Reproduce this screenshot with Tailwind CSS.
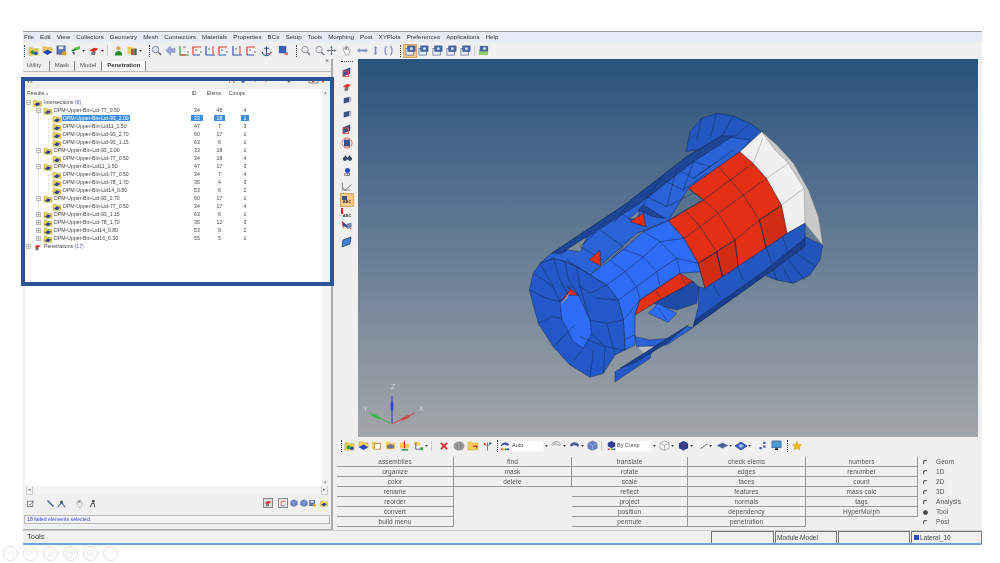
<!DOCTYPE html>
<html lang="en">
<head>
    <meta charset="UTF-8">
    <title>HyperMesh - Penetration</title>
    <script src="https://cdn.jsdelivr.net/npm/@tailwindcss/browser@4"></script>
</head>
<body class="bg-white w-[1000px] h-[563px] overflow-hidden relative font-['Liberation_Sans',Arial,sans-serif] text-[#444]">

<!-- shared icons -->
<svg class="hidden">
    <symbol id="fold" viewBox="0 0 12 10"><path d="M1 2h4l1 1h5v6H1z" fill="#f4d64e" stroke="#a98f26" stroke-width=".6"/><path d="M6 4l4 2-4 3-4-2z" fill="#2b3f9e"/></symbol>
    <symbol id="mix" viewBox="0 0 12 12"><path d="M1 3h4l1 1h5v7H1z" fill="#f1cf5a" stroke="#a98f26" stroke-width=".5"/><circle cx="5" cy="8" r="2.2" fill="#2d9c3c"/><circle cx="8.5" cy="9" r="2" fill="#2c49b0"/></symbol>
    <symbol id="fblue" viewBox="0 0 12 12"><path d="M1 2h4l1 1h5v5H1z" fill="#f1cf5a" stroke="#a98f26" stroke-width=".5"/><path d="M6 5l5 3-5 3-5-3z" fill="#2242c0"/></symbol>
    <symbol id="disk" viewBox="0 0 12 12"><rect x="1" y="1" width="9" height="9" fill="#5b74b4" stroke="#2d3f78" stroke-width=".6"/><rect x="3" y="1.500" width="5" height="3" fill="#e8edf8"/><circle cx="9" cy="9" r="2.500" fill="#d8a52a"/></symbol>
    <symbol id="green" viewBox="0 0 12 12"><path d="M1 6l5-3 3 1-5 3z" fill="#2f8f2e"/><path d="M5 3l6-2v3l-4 2z" fill="#62b84a"/><path d="M2 8l3 3V8z" fill="#2f3f7a"/></symbol>
    <symbol id="redc" viewBox="0 0 12 12"><path d="M1 6l5-3 5 1-5 4z" fill="#d6332a"/><path d="M3 8l5-1-1 4H3z" fill="#777"/></symbol>
    <symbol id="user" viewBox="0 0 12 12"><circle cx="6" cy="3" r="2.300" fill="#d9a55f"/><path d="M2 11c0-4 2-5 4-5s4 1 4 5z" fill="#2f8a38"/></symbol>
    <symbol id="rain" viewBox="0 0 12 12"><path d="M1 2h4l1 1h5v7H1z" fill="#f1cf5a"/><path d="M5 4h2v7H5z" fill="#d03a35"/><path d="M7 4h2v7H7z" fill="#38a040"/><path d="M9 4h2v7H9z" fill="#3552b8"/></symbol>
    <symbol id="zoomi" viewBox="0 0 12 12"><circle cx="5" cy="5" r="3.500" fill="#dfe4f2" stroke="#7b86a8"/><path d="M8 8l3 3" stroke="#666" stroke-width="1.500"/></symbol>
    <symbol id="larrow" viewBox="0 0 12 12"><path d="M1 6l5-5v3h5v4H6v3z" fill="#9aa6d6" stroke="#6c78a8" stroke-width=".5"/></symbol>
    <symbol id="axgr" viewBox="0 0 12 12"><path d="M2 1v9h9" fill="none" stroke="#3aa043" stroke-width="1.200"/><path d="M2 10h6" stroke="#d9423a" stroke-width="1"/><path d="M5 2h3M9 7h2" stroke="#555" stroke-width=".8"/></symbol>
    <symbol id="axrb" viewBox="0 0 12 12"><path d="M2 10V2h8" fill="none" stroke="#d9423a" stroke-width="1.200"/><path d="M2 10h7" stroke="#3450b4" stroke-width="1"/><path d="M4 5h2M9 7h2" stroke="#555" stroke-width=".8"/></symbol>
    <symbol id="axbr" viewBox="0 0 12 12"><path d="M2 1v9h9" fill="none" stroke="#3450b4" stroke-width="1.200"/><path d="M9 1v9" stroke="#d9423a" stroke-width="1"/><path d="M4 4h2" stroke="#555" stroke-width=".8"/></symbol>
    <symbol id="anchor" viewBox="0 0 12 12"><path d="M6 1v9M3 3h6M1 7c1 3 3 4 5 4s4-1 5-4" fill="none" stroke="#3b5aa6" stroke-width="1.300"/><path d="M6 9h3" stroke="#d9423a"/></symbol>
    <symbol id="cubear" viewBox="0 0 12 12"><rect x="1" y="1" width="8" height="8" fill="#3a5bb8"/><path d="M6 10l5-2-1 3z" fill="#d9423a"/></symbol>
    <symbol id="zoomg" viewBox="0 0 12 12"><circle cx="5.500" cy="5" r="3.500" fill="#eee" stroke="#8a8f9c"/><path d="M8 8l3 3" stroke="#777" stroke-width="1.500"/></symbol>
    <symbol id="cross" viewBox="0 0 12 12"><path d="M6 1v10M1 6h10" stroke="#7c88aa" stroke-width="1.100"/><path d="M6 1L4.500 3h3zM6 11L4.500 9h3zM1 6l2-1.500v3zM11 6L9 4.500v3z" fill="#5d6c96"/></symbol>
    <symbol id="hand" viewBox="0 0 12 12"><path d="M3 6V3l1 0 1 2V1.500h1V5l1-3 1 .5V6l1-1 1 1-2 5H5z" fill="#fff" stroke="#666" stroke-width=".6"/></symbol>
    <symbol id="hz" viewBox="0 0 12 12"><path d="M0 6l3-2.500v1.500h6V3.500L12 6 9 8.500V7H3v1.500z" fill="#7f8ec0"/></symbol>
    <symbol id="vt" viewBox="0 0 12 12"><path d="M6 0l2.500 3H7v6h1.500L6 12 3.500 9H5V3H3.500z" fill="#7f8ec0"/></symbol>
    <symbol id="rot" viewBox="0 0 12 12"><path d="M4 1C1.500 3 1.500 9 4 11M8 1c2.500 2 2.500 8 0 10" fill="none" stroke="#7f8ec0" stroke-width="1.300"/></symbol>
    <symbol id="view" viewBox="0 0 12 12"><rect x="1" y="4" width="8" height="7" fill="#e8edf8" stroke="#4c5f8e" stroke-width=".7"/><rect x="3" y="1" width="8" height="6" fill="#4d6aa8" stroke="#33487a" stroke-width=".6"/><circle cx="7" cy="4" r="1.500" fill="#d6e0f4"/></symbol>
    <symbol id="viewg" viewBox="0 0 12 12"><rect x="1" y="5" width="10" height="6" fill="#8fd06a"/><rect x="2" y="1" width="9" height="6" fill="#4d6aa8"/><circle cx="7" cy="4" r="1.500" fill="#d6e0f4"/></symbol>
    <symbol id="vbox" viewBox="0 0 12 12"><path d="M1 3l8-2v7l-8 2z" fill="#3d4f86"/><path d="M8 2l3-1v6l-3 1z" fill="#aab2c8"/></symbol>
    <symbol id="cube" viewBox="0 0 12 12"><path d="M6 1l5 2.500v5.500L6 11.500 1 9V3.500z" fill="#6a80c4" stroke="#44548e" stroke-width=".5"/><path d="M6 6v5.500M1 3.500L6 6l5-2.500" fill="none" stroke="#d5dbf0" stroke-width=".5"/></symbol>
    <symbol id="wire" viewBox="0 0 12 12"><path d="M6 1l5 2.500v5.500L6 11.500 1 9V3.500zM6 6v5.500M1 3.500L6 6l5-2.500" fill="#f4f4f4" stroke="#888" stroke-width=".6"/></symbol>
    <symbol id="cubed" viewBox="0 0 12 12"><path d="M6 1l5 2.500v5.500L6 11.500 1 9V3.500z" fill="#2e3f8e"/><path d="M6 6v5.500M1 3.500L6 6l5-2.500" fill="none" stroke="#7a3a8a" stroke-width=".6"/></symbol>
    <symbol id="dia" viewBox="0 0 12 12"><path d="M0 6l6-3 6 3-6 3z" fill="#4d5f92" stroke="#7c88aa" stroke-width=".5"/></symbol>
    <symbol id="diab" viewBox="0 0 12 12"><path d="M0 6l6-4 6 4-6 4z" fill="#3a5bd0" stroke="#26398e" stroke-width=".7"/><path d="M3 6l3-2 3 2-3 2z" fill="#a7b8ee"/></symbol>
    <symbol id="dots" viewBox="0 0 12 12"><path d="M2 8h3v3H2zM7 6h3v3H7zM7 1h3v3H7z" fill="#3f57b4"/></symbol>
    <symbol id="mon" viewBox="0 0 12 12"><rect x="1" y="1" width="10" height="7.500" fill="#4d9ad6" stroke="#33487a" stroke-width=".6"/><path d="M4 11h4l-1-2.500H5z" fill="#333"/></symbol>
    <symbol id="star" viewBox="0 0 12 12"><path d="M6 .5l1.700 3.600 3.900.5-2.900 2.700.8 3.900L6 8.800l-3.500 1.900.8-3.900L.4 4.600l3.900-.5z" fill="#f2b70f" stroke="#b58a12" stroke-width=".4"/></symbol>
    <symbol id="xred" viewBox="0 0 12 12"><path d="M1.500 3L3 1.500l3 3 3-3L10.500 3l-3 3 3 3L9 10.500l-3-3-3 3L1.500 9l3-3z" fill="#d8282a"/></symbol>
    <symbol id="blob" viewBox="0 0 12 12"><ellipse cx="6" cy="6" rx="5.500" ry="4.500" fill="#9a9a9a"/><path d="M3 4c2 3 2 4 1 6M7 2c1 3 1 5 0 8" stroke="#666" fill="none" stroke-width=".6"/></symbol>
    <symbol id="swapf" viewBox="0 0 12 12"><path d="M1 2h4l1 1h5v7H1z" fill="#f1cf5a" stroke="#b89a2a" stroke-width=".4"/><path d="M4 7h5v2l2-2.500L9 5" fill="#d8423a"/></symbol>
    <symbol id="fork" viewBox="0 0 12 12"><path d="M6 2v9M6 6L3 4M6 6l3-2" stroke="#777" fill="none"/><circle cx="3" cy="4" r="1.200" fill="#d83a32"/><circle cx="9" cy="3" r="1.200" fill="#3450b4"/></symbol>
    <symbol id="boxi" viewBox="0 0 12 12"><path d="M1 2h4l1 1h5v7H1z" fill="#f1cf5a"/><rect x="4" y="4" width="6" height="6" fill="#fff" stroke="#c64" stroke-width=".7"/></symbol>
    <symbol id="gear" viewBox="0 0 12 12"><path d="M1 2h4l1 1h5v7H1z" fill="#f1cf5a"/><ellipse cx="6" cy="7" rx="4" ry="2.500" fill="#777"/></symbol>
    <symbol id="redb" viewBox="0 0 12 12"><path d="M1 3h4l1 1h5v5H1z" fill="#f1cf5a"/><path d="M6 1v8" stroke="#d8282a" stroke-width="1.400"/><path d="M3 10h7v1.500H3z" fill="#2e8a3a"/></symbol>
    <symbol id="axis" viewBox="0 0 12 12"><path d="M1 2h4l1 1h2v3H1z" fill="#f1cf5a"/><path d="M3 3v7h7" fill="none" stroke="#5060c0"/><rect x="8" y="8" width="3" height="3" fill="#3ca03c"/></symbol>
    <symbol id="carrow" viewBox="0 0 4 3"><path d="M0 0h4L2 3z" fill="#333"/></symbol>
    <symbol id="ring" viewBox="0 0 12 12"><path d="M1 5c2-4 7-4 9-1 1 2-1 2-3 1-2-1-4-1-5 1z" fill="none" stroke="#8a8a8a"/></symbol>
    <symbol id="ringd" viewBox="0 0 12 12"><path d="M1 6c1-4 7-5 10-1l-1 3C8 5 5 5 3 7z" fill="#4d5f92"/></symbol>
    <symbol id="autoi" viewBox="0 0 12 12"><path d="M1 5c2-4 7-4 10-1l-2 2C7 4 4 4 2 6z" fill="#3c50a8"/><path d="M1 9h2.500v2H1z" fill="#d8423a"/><path d="M3.500 9H6v2H3.500z" fill="#e0c030"/><path d="M6 9h2.500v2H6z" fill="#38a040"/><path d="M8.500 9H11v2H8.500z" fill="#3552b8"/></symbol>
    <symbol id="compi" viewBox="0 0 12 12"><path d="M6 0l5 2.500V7L6 9.500 1 7V2.500z" fill="#2e3f8e"/><path d="M1 10h2.500v2H1z" fill="#d8423a"/><path d="M3.500 10H6v2H3.500z" fill="#e0c030"/><path d="M6 10h2.500v2H6z" fill="#38a040"/><path d="M8.500 10H11v2H8.500z" fill="#3552b8"/></symbol>
    <symbol id="vic" viewBox="0 0 12 12"><path d="M1 4l8-3v7l-8 3z" fill="#3d4f86"/><rect x="1" y="5" width="6" height="6" fill="none" stroke="#e25b48"/></symbol>
    <symbol id="pl" viewBox="0 0 7 7"><rect x=".5" y=".5" width="6" height="6" fill="#f4f4f4" stroke="#aaa"/><path d="M2 3.500h3M3.500 2v3" stroke="#777" stroke-width=".7"/></symbol>
    <symbol id="mi" viewBox="0 0 7 7"><rect x=".5" y=".5" width="6" height="6" fill="#f4f4f4" stroke="#aaa"/><path d="M2 3.500h3" stroke="#777" stroke-width=".7"/></symbol>
</svg>

<!-- application window -->
<div class="absolute left-[23px] top-[31px] w-[959px] h-[512px] bg-[#f0f0f0] border-t border-[#9a9a9a] flex flex-col blur-[0.3px]">

    <!-- menu bar -->
    <div class="h-[10px] bg-[#e6ebf7] flex items-center pl-[1px] gap-[6.1px] text-[6.2px] text-[#333] shrink-0">
        <span>File</span><span>Edit</span><span>View</span><span>Collectors</span><span>Geometry</span><span>Mesh</span><span>Connectors</span><span>Materials</span><span>Properties</span><span>BCs</span><span>Setup</span><span>Tools</span><span>Morphing</span><span>Post</span><span>XYPlots</span><span>Preferences</span><span>Applications</span><span>Help</span>
    </div>

    <!-- main toolbar -->
    <div class="h-[17px] flex items-center shrink-0">
        <div class="w-[1px] h-[12px] ml-[1px] border-l border-dotted border-[#444]"></div>
        <svg class="w-[11px] h-[11px] ml-[3px]"><use href="#mix"/></svg>
        <svg class="w-[11px] h-[11px] ml-[3px]"><use href="#fblue"/></svg>
        <svg class="w-[11px] h-[11px] ml-[3px]"><use href="#disk"/></svg>
        <svg class="w-[11px] h-[11px] ml-[3px]"><use href="#green"/></svg>
        <svg class="w-[3px] h-[2px] ml-[1px]"><use href="#carrow"/></svg>
        <svg class="w-[12px] h-[11px] ml-[3px]"><use href="#redc"/></svg>
        <svg class="w-[3px] h-[2px] ml-[1px]"><use href="#carrow"/></svg>
        <div class="w-[1px] h-[11px] ml-[3px] bg-[#ccc]"></div>
        <svg class="w-[11px] h-[12px] ml-[5px]"><use href="#user"/></svg>
        <svg class="w-[12px] h-[11px] ml-[2px]"><use href="#rain"/></svg>
        <svg class="w-[3px] h-[2px] ml-[1px]"><use href="#carrow"/></svg>
        <div class="w-[1px] h-[12px] ml-[7px] border-l border-dotted border-[#444]"></div>
        <svg class="w-[11px] h-[11px] ml-[1px]"><use href="#zoomi"/></svg>
        <svg class="w-[11px] h-[11px] ml-[3px]"><use href="#larrow"/></svg>
        <svg class="w-[12px] h-[12px] ml-[2px]"><use href="#axgr"/></svg>
        <svg class="w-[12px] h-[12px] ml-[1px]"><use href="#axrb"/></svg>
        <svg class="w-[12px] h-[12px] ml-[1px]"><use href="#axbr"/></svg>
        <svg class="w-[12px] h-[12px] ml-[1px]"><use href="#axrb"/></svg>
        <svg class="w-[12px] h-[12px] ml-[2px]"><use href="#axbr"/></svg>
        <svg class="w-[12px] h-[12px] ml-[2px]"><use href="#axrb"/></svg>
        <svg class="w-[11px] h-[12px] ml-[4px]"><use href="#anchor"/></svg>
        <svg class="w-[11px] h-[11px] ml-[6px]"><use href="#cubear"/></svg>
        <div class="w-[1px] h-[12px] ml-[7px] border-l border-dotted border-[#444]"></div>
        <svg class="w-[11px] h-[11px] ml-[3px]"><use href="#zoomg"/></svg>
        <svg class="w-[11px] h-[11px] ml-[3px]"><use href="#zoomg"/></svg>
        <svg class="w-[11px] h-[11px] ml-[1px]"><use href="#cross"/></svg>
        <svg class="w-[11px] h-[11px] ml-[4px]"><use href="#hand"/></svg>
        <svg class="w-[11px] h-[11px] ml-[5px]"><use href="#hz"/></svg>
        <svg class="w-[9px] h-[11px] ml-[3px]"><use href="#vt"/></svg>
        <svg class="w-[11px] h-[11px] ml-[3px]"><use href="#rot"/></svg>
        <div class="w-[1px] h-[12px] ml-[6px] border-l border-dotted border-[#444]"></div>
        <div class="w-[14px] h-[14px] ml-[2px] bg-[#f8c98a] border border-[#d9a868] flex items-center justify-center"><svg class="w-[11px] h-[11px]"><use href="#view"/></svg></div>
        <svg class="w-[11px] h-[11px] ml-[1px]"><use href="#view"/></svg>
        <svg class="w-[11px] h-[11px] ml-[3px]"><use href="#view"/></svg>
        <svg class="w-[11px] h-[11px] ml-[3px]"><use href="#view"/></svg>
        <svg class="w-[11px] h-[11px] ml-[3px]"><use href="#view"/></svg>
        <div class="w-[1px] h-[11px] ml-[3px] bg-[#ccc]"></div>
        <svg class="w-[11px] h-[11px] ml-[3px]"><use href="#viewg"/></svg>
    </div>

    <div class="flex grow min-h-0">
        <!-- left panel -->
        <div class="w-[310px] shrink-0 border-r-2 border-b border-[#aaa] flex flex-col relative">
            <div class="h-[12px] flex items-end text-[6px] text-[#555] shrink-0">
                <span class="pl-[3.500px] pr-[7.500px] pb-[1px]">Utility</span>
                <span class="border-l border-[#888] px-[5px] pb-[1px]">Mask</span>
                <span class="border-l border-[#888] px-[5px] pb-[1px]">Model</span>
                <span class="border-l border-r border-[#888] pl-[5px] pr-[5px] pb-[1px] font-bold text-[#333] bg-[#f7f7f7]">Penetration</span>
            </div>
            <span class="absolute right-[2px] top-[-3px] text-[7px] text-[#666]">×</span>
            <div class="h-[18px] border-t border-[#bbb] shrink-0 flex items-start pl-[4px] pr-[6px] pt-[6px] text-[5px] text-[#666]">
                <span class="grow">▾s</span>
                <svg class="w-[96px] h-[6px]" viewBox="0 0 96 6">
                    <path d="M0 1h5v4M0 1v4" fill="none" stroke="#d9423a"/><circle cx="14" cy="3" r="2" fill="#5a74b8"/><path d="M24 1l2 3 2-3" fill="#3c5ea8"/><path d="M35 1l2 3 2-3" fill="#d9423a"/>
                    <circle cx="60" cy="3" r="1.500" fill="#666"/><path d="M80 1h9v4h-9z" fill="none" stroke="#888"/><path d="M82 2l2 3 2-3" fill="#d9423a"/><path d="M92 2l2 3 2-3" fill="#d9423a"/>
                </svg>
            </div>

            <!-- results list -->
            <div class="grow mx-[2px] bg-white relative text-[5.200px] text-[#444] min-h-0">
                <div class="h-[10px] flex items-center pr-[77px] pl-[2px]">
                    <span class="grow">Results <span class="text-[#999]">▴</span></span>
                    <span class="w-[24px] text-center">ID</span>
                    <span class="w-[16px] text-center">Elems</span>
                    <span class="w-[30px] text-center">Comps</span>
                </div>

                <!-- tree guide lines -->
                <svg class="absolute left-0 top-[10px] w-[40px] h-[152px]">
                    <path d="M3.500 4V148M13.500 14V132M28 14H18M23.500 20V44M23.500 20h5M23.500 28h5M23.500 36h5M23.500 44h5M23.500 60h5M23.500 76h5M23.500 84h5M23.500 92h5M23.500 108h5M23.500 76V92" fill="none" stroke="#bbb" stroke-width=".6" stroke-dasharray="1 1"/>
                    <use href="#mi" x="1" y="1" width="5" height="5"/>
                    <use href="#mi" x="11" y="9" width="5" height="5"/>
                    <use href="#mi" x="11" y="49" width="5" height="5"/>
                    <use href="#mi" x="11" y="65" width="5" height="5"/>
                    <use href="#mi" x="11" y="97" width="5" height="5"/>
                    <use href="#pl" x="11" y="113" width="5" height="5"/>
                    <use href="#pl" x="11" y="121" width="5" height="5"/>
                    <use href="#pl" x="11" y="129" width="5" height="5"/>
                    <use href="#pl" x="11" y="137" width="5" height="5"/>
                    <use href="#pl" x="1" y="145" width="5" height="5"/>
                </svg>

                <div class="pr-[69px]">
                    <div class="flex h-2 items-center pl-[7px]"><svg class="w-[11px] h-[8px]"><use href="#fold"/></svg><span class="grow ml-[1px]">Intersections <span class="text-[#4b5de0]">(8)</span></span></div>
                    <div class="flex h-2 items-center pl-[18px]"><svg class="w-[10px] h-[8px]"><use href="#fold"/></svg><span class="grow ml-[1px]">DPM-Upper-Bin-Lid-77_0.50</span><span class="w-[24px] text-center">34</span><span class="w-[21px] text-center">48</span><span class="w-[30px] text-center">4</span></div>
                    <div class="flex h-2 items-center pl-[27px]"><svg class="w-[10px] h-[8px]"><use href="#fold"/></svg><span class="grow"><span class="bg-[#3a8ee6] text-white px-[1px]">DPM-Upper-Bin-Lid-93_2.00</span></span><span class="w-[24px] text-center"><span class="bg-[#3a8ee6] text-white px-[3px]">33</span></span><span class="w-[21px] text-center"><span class="bg-[#3a8ee6] text-white px-[3px]">18</span></span><span class="w-[30px] text-center"><span class="bg-[#3a8ee6] text-white px-[3px]">1</span></span></div>
                    <div class="flex h-2 items-center pl-[27px]"><svg class="w-[10px] h-[8px]"><use href="#fold"/></svg><span class="grow ml-[1px]">DPM-Upper-Bin-Lid11_1.50</span><span class="w-[24px] text-center">47</span><span class="w-[21px] text-center">7</span><span class="w-[30px] text-center">3</span></div>
                    <div class="flex h-2 items-center pl-[27px]"><svg class="w-[10px] h-[8px]"><use href="#fold"/></svg><span class="grow ml-[1px]">DPM-Upper-Bin-Lid-93_2.70</span><span class="w-[24px] text-center">60</span><span class="w-[21px] text-center">17</span><span class="w-[30px] text-center">1</span></div>
                    <div class="flex h-2 items-center pl-[27px]"><svg class="w-[10px] h-[8px]"><use href="#fold"/></svg><span class="grow ml-[1px]">DPM-Upper-Bin-Lid-93_1.15</span><span class="w-[24px] text-center">63</span><span class="w-[21px] text-center">6</span><span class="w-[30px] text-center">1</span></div>
                    <div class="flex h-2 items-center pl-[18px]"><svg class="w-[10px] h-[8px]"><use href="#fold"/></svg><span class="grow ml-[1px]">DPM-Upper-Bin-Lid-93_2.00</span><span class="w-[24px] text-center">33</span><span class="w-[21px] text-center">18</span><span class="w-[30px] text-center">1</span></div>
                    <div class="flex h-2 items-center pl-[27px]"><svg class="w-[10px] h-[8px]"><use href="#fold"/></svg><span class="grow ml-[1px]">DPM-Upper-Bin-Lid-77_0.50</span><span class="w-[24px] text-center">34</span><span class="w-[21px] text-center">18</span><span class="w-[30px] text-center">4</span></div>
                    <div class="flex h-2 items-center pl-[18px]"><svg class="w-[10px] h-[8px]"><use href="#fold"/></svg><span class="grow ml-[1px]">DPM-Upper-Bin-Lid11_1.50</span><span class="w-[24px] text-center">47</span><span class="w-[21px] text-center">17</span><span class="w-[30px] text-center">3</span></div>
                    <div class="flex h-2 items-center pl-[27px]"><svg class="w-[10px] h-[8px]"><use href="#fold"/></svg><span class="grow ml-[1px]">DPM-Upper-Bin-Lid-77_0.50</span><span class="w-[24px] text-center">34</span><span class="w-[21px] text-center">7</span><span class="w-[30px] text-center">4</span></div>
                    <div class="flex h-2 items-center pl-[27px]"><svg class="w-[10px] h-[8px]"><use href="#fold"/></svg><span class="grow ml-[1px]">DPM-Upper-Bin-Lid-78_1.70</span><span class="w-[24px] text-center">35</span><span class="w-[21px] text-center">4</span><span class="w-[30px] text-center">3</span></div>
                    <div class="flex h-2 items-center pl-[27px]"><svg class="w-[10px] h-[8px]"><use href="#fold"/></svg><span class="grow ml-[1px]">DPM-Upper-Bin-Lid14_0.80</span><span class="w-[24px] text-center">53</span><span class="w-[21px] text-center">6</span><span class="w-[30px] text-center">2</span></div>
                    <div class="flex h-2 items-center pl-[18px]"><svg class="w-[10px] h-[8px]"><use href="#fold"/></svg><span class="grow ml-[1px]">DPM-Upper-Bin-Lid-93_2.70</span><span class="w-[24px] text-center">60</span><span class="w-[21px] text-center">17</span><span class="w-[30px] text-center">1</span></div>
                    <div class="flex h-2 items-center pl-[27px]"><svg class="w-[10px] h-[8px]"><use href="#fold"/></svg><span class="grow ml-[1px]">DPM-Upper-Bin-Lid-77_0.50</span><span class="w-[24px] text-center">34</span><span class="w-[21px] text-center">17</span><span class="w-[30px] text-center">4</span></div>
                    <div class="flex h-2 items-center pl-[18px]"><svg class="w-[10px] h-[8px]"><use href="#fold"/></svg><span class="grow ml-[1px]">DPM-Upper-Bin-Lid-93_1.15</span><span class="w-[24px] text-center">63</span><span class="w-[21px] text-center">6</span><span class="w-[30px] text-center">1</span></div>
                    <div class="flex h-2 items-center pl-[18px]"><svg class="w-[10px] h-[8px]"><use href="#fold"/></svg><span class="grow ml-[1px]">DPM-Upper-Bin-Lid-78_1.70</span><span class="w-[24px] text-center">35</span><span class="w-[21px] text-center">12</span><span class="w-[30px] text-center">3</span></div>
                    <div class="flex h-2 items-center pl-[18px]"><svg class="w-[10px] h-[8px]"><use href="#fold"/></svg><span class="grow ml-[1px]">DPM-Upper-Bin-Lid14_0.80</span><span class="w-[24px] text-center">53</span><span class="w-[21px] text-center">9</span><span class="w-[30px] text-center">2</span></div>
                    <div class="flex h-2 items-center pl-[18px]"><svg class="w-[10px] h-[8px]"><use href="#fold"/></svg><span class="grow ml-[1px]">DPM-Upper-Bin-Lid16_0.30</span><span class="w-[24px] text-center">55</span><span class="w-[21px] text-center">5</span><span class="w-[30px] text-center">1</span></div>
                    <div class="flex h-2 items-center pl-[7px]"><svg class="w-[11px] h-[8px]"><use href="#redc"/></svg><span class="grow ml-[1px]">Penetrations <span class="text-[#4b5de0]">(17)</span></span></div>
                </div>

                <!-- vertical scrollbar -->
                <div class="absolute right-0 top-0 bottom-0 w-[7px] bg-[#f3f3f3] flex flex-col justify-between items-center text-[5px] text-[#888]"><span>▴</span><span>▾</span></div>
            </div>

            <!-- horizontal scrollbar -->
            <div class="h-[8px] mx-[2px] bg-[#f3f3f3] flex justify-between items-center px-[1px] text-[5px] text-[#888] shrink-0"><span class="border border-[#ccc] px-[1px]">◂</span><span class="border border-[#ccc] px-[1px]">▸</span></div>

            <!-- panel actions -->
            <div class="h-[18px] flex items-center pl-[4px] pr-[3px] shrink-0">
                <svg class="w-[7px] h-[7px]" viewBox="0 0 12 12"><rect x="1" y="2" width="9" height="9" fill="#fff" stroke="#444"/><path d="M3 6l2 3 6-8" fill="none" stroke="#456" stroke-width="1.200"/></svg>
                <svg class="w-[9px] h-[9px] ml-[12px]" viewBox="0 0 12 12"><path d="M2 2l8 8" stroke="#3c6ab0" stroke-width="2"/></svg>
                <svg class="w-[9px] h-[9px] ml-[2px]" viewBox="0 0 12 12"><circle cx="6" cy="4" r="2" fill="#555"/><path d="M1 11l4-5 2 0 4 5" fill="none" stroke="#3c5ea8" stroke-width="1.400"/></svg>
                <svg class="w-[9px] h-[9px] ml-[9px]"><use href="#hand"/></svg>
                <svg class="w-[9px] h-[9px] ml-[4px]" viewBox="0 0 12 12"><circle cx="7" cy="3" r="2" fill="#555"/><path d="M3 11l2-5 3 0 1 5" fill="none" stroke="#555" stroke-width="1.400"/></svg>
                <div class="grow"></div>
                <div class="w-[10px] h-[10px] bg-[#ddd] border border-[#888] flex items-center justify-center mr-[2px]"><svg class="w-[8px] h-[8px]"><use href="#redc"/></svg></div>
                <div class="w-[10px] h-[10px] ml-[3px] bg-[#eee] border border-[#888] flex items-center justify-center"><svg class="w-[7px] h-[7px]"><use href="#axrb"/></svg></div>
                <svg class="w-[8px] h-[8px] ml-[2px]"><use href="#cube"/></svg>
                <svg class="w-[8px] h-[8px] ml-[2px]"><use href="#cube"/></svg>
                <svg class="w-[7px] h-[7px] ml-[1px]"><use href="#disk"/></svg>
                <svg class="w-[8px] h-[7px] ml-[4px]"><use href="#fold"/></svg>
            </div>

            <!-- message line -->
            <div class="h-[9px] mt-[3px] mx-[1px] border border-[#bbb] bg-[#f3f3f3] text-[5.200px] text-[#3c4fe0] flex items-center pl-[2px] shrink-0">18 failed elements selected.</div>
            <div class="h-[5px] shrink-0"></div>
        </div>

        <!-- right side -->
        <div class="grow flex flex-col min-w-0">
            <div class="h-[378px] flex shrink-0">
                <div class="w-[25px] pl-[3px] flex flex-col items-center text-[4px] font-bold shrink-0 pt-[1px]">
                    <div class="h-[4px] w-[12px] border-t border-dotted border-[#444] mt-[1px]"></div>
                    <svg class="w-[11px] h-[12px] mt-[1px]"><use href="#vic"/></svg>
                    <svg class="w-[10px] h-[11px] mt-[3px]"><use href="#redc"/></svg>
                    <svg class="w-[9px] h-[11px] mt-[3px]"><use href="#vbox"/></svg>
                    <svg class="w-[9px] h-[11px] mt-[3px]"><use href="#vbox"/></svg>
                    <svg class="w-[11px] h-[12px] mt-[3px]"><use href="#vic"/></svg>
                    <svg class="w-[12px] h-[12px] mt-[2px]" viewBox="0 0 12 12"><circle cx="6" cy="6" r="5" fill="#fff" stroke="#e25b48"/><rect x="3" y="2.500" width="6" height="7" fill="#3d4f86"/></svg>
                    <svg class="w-[11px] h-[10px] mt-[4px]" viewBox="0 0 12 12"><circle cx="3" cy="7" r="2.500" fill="#33466e"/><circle cx="9" cy="7" r="2.500" fill="#33466e"/><path d="M3 3l3 4 3-4" fill="none" stroke="#33466e" stroke-width="1.500"/></svg>
                    <div class="mt-[5px] flex flex-col items-center leading-[4px]"><span class="w-[5px] h-[5px] rounded-full bg-[#2c49b0]"></span><span class="text-[#444]">123</span></div>
                    <svg class="w-[12px] h-[11px] mt-[3px]" viewBox="0 0 12 12"><path d="M1 3v8h9M1 8l3 3 7-6" fill="none" stroke="#666" stroke-width=".8"/></svg>
                    <div class="w-[14px] h-[14px] mt-[2px] bg-[#f8c98a] border border-[#d9a868] flex flex-col items-center justify-center leading-[4px]"><span class="w-[5px] h-[4px] bg-[#3d4f86] self-start ml-[1px]"></span><span class="text-[#333]">ABC</span></div>
                    <div class="mt-[1px] flex flex-col items-center leading-[4px] w-[12px]"><span class="w-[1.500px] h-[6px] bg-[#d8282a] self-start"></span><span class="text-[#333]">ABC</span></div>
                    <svg class="w-[12px] h-[11px] mt-[1px]" viewBox="0 0 12 12"><path d="M1 3l6 4v3L1 7z" fill="#3d4f86"/><path d="M6 5l5-1v5l-5 2z" fill="#7d8ab0"/><path d="M1 2l1 8M9 10l2 1" stroke="#d8282a"/></svg>
                    <svg class="w-[12px] h-[12px] mt-[6px]" viewBox="0 0 12 12"><path d="M2 4l8-3-1 7-8 3z" fill="#3f7fd0" stroke="#223766" stroke-width=".7"/></svg>
                </div>

                <!-- graphics area -->
                <div class="w-[620px] shrink-0 relative bg-linear-to-b from-[#28537d] to-[#a3a6a9] overflow-hidden">
                    <svg class="absolute left-[122px] top-[31px] w-[360px] h-[300px]" viewBox="0 0 1080 900" stroke="#15284f" stroke-width="1.500" stroke-linejoin="round">
                        <!-- rear flange -->
                        <path d="M618 185L630 125 665 85 710 70 760 78 810 100 845 125 780 185 700 170Z" fill="#2456c0"/>
                        <path d="M650 150L665 85M690 145L710 70M725 140L760 78M765 140L810 100" fill="none"/>
                        <path d="M975 440L1028 465 1020 510 990 555 940 580 890 570 858 558 940 490Z" fill="#2254bc"/>
                        <path d="M950 490L1008 530M925 510L975 570M905 525L935 580M880 540L890 570" fill="none"/>
                        <!-- upper shell -->
                        <path d="M180 520L215 490 440 340 620 200 725 138 810 150 780 185 625 295 565 392 470 430 330 555 290 530 255 515 220 505Z" fill="#2b62d6"/>
                        <path d="M215 490L440 340 620 200 725 138 760 138 640 215 480 340 245 490Z" fill="#1d4696"/>
                        <path d="M255 482L320 440 302 485 262 480ZM445 388L480 360 472 385Z" fill="#7c8b9c"/>
                        <path d="M490 345L555 385 520 380 474 360Z" fill="#1d4696"/>
                        <path d="M500 320L560 350 640 310M540 265L610 300 680 250M590 235L640 265 710 215M640 215L690 230 760 180M430 375L490 410M360 420L430 470M300 470L370 510M260 510L330 555M400 400L450 340M490 345L540 265M560 350L590 235M610 300L640 215M640 265L690 230M350 425L300 470M430 470L390 510" fill="none"/>
                        <!-- lit surface -->
                        <path d="M330 555L390 510 430 478 490 425 565 392 612 445 655 520 665 545 600 550 480 630 465 675 465 765 435 780 430 690 415 630 380 585Z" fill="#2e6cf5"/>
                        <path d="M380 585L435 545 490 500 540 455 612 445M415 630L470 590 530 545 590 505 655 520M430 690L480 630 540 590 600 550M390 510L435 545 470 590 480 630M430 478L490 500 530 545 540 590M490 425L540 455 590 505 600 550M430 750L465 735" fill="none"/>
                        <!-- red notches -->
                        <path d="M450 395L490 370 497 410Z" fill="#e33014"/>
                        <path d="M327 510L360 480 362 527Z" fill="#e33014"/>
                        <!-- red panel -->
                        <path d="M625 295L715 230 780 185 820 220 860 265 905 345 922 430 775 535 675 595 655 520 612 445 565 392 670 330Z" fill="#e33014"/>
                        <path d="M858 475L922 430 905 345 838 390ZM727 560L775 535 765 450 710 485ZM675 595L727 560 710 485 655 520Z" fill="#cf2c12"/>
                        <path d="M565 392L615 360 670 330 750 270 820 220M612 445L660 410 715 370 790 315 860 265M655 520L710 485 765 450 838 390 905 345M615 360L660 410 710 485 727 560M625 295L670 330 715 370 765 450 775 535M715 230L750 270 790 315 838 390 860 475" fill="none"/>
                        <!-- white end -->
                        <path d="M780 185L845 125 890 165 940 220 985 300 1015 380 1028 465 975 400 922 430 905 345 860 265 820 220Z" fill="#f0f0f0" stroke="#555" stroke-width="1"/>
                        <path d="M845 125L890 165 940 220 985 300 1015 380 1028 465 975 400 972 295 925 220 885 180Z" fill="#c9c9c9" stroke="#666" stroke-width="1"/>
                        <path d="M820 220L848 145M860 265L925 220M905 345L972 295M922 430L975 400" fill="none" stroke="#555" stroke-width="1"/>
                        <!-- lower shell -->
                        <path d="M675 595L922 430 975 400 975 445 850 560 640 710 655 650 655 590Z" fill="#2456c0"/>
                        <path d="M700 585L720 620M775 535L790 570M860 475L875 520M908 440L925 490" fill="none"/>
                        <path d="M640 710L850 560 975 470 975 445 850 545 645 690Z" fill="#1a3f8e"/>
                        <!-- inner red strip -->
                        <path d="M465 675L480 630 600 550 640 575 540 630 490 660Z" fill="#e33014"/>
                        <path d="M527 600L545 628M600 550L615 580 640 575" fill="none"/>
                        <path d="M540 630L640 575 655 590 650 640 590 660 520 640Z" fill="#1f4aa5"/>
                        <path d="M505 670L535 640 590 670 565 697Z" fill="#2e6cf5"/>
                        <path d="M535 655L560 690" fill="none"/>
                        <!-- front ring -->
                        <path d="M148 600L160 550 180 520 220 505 255 515 290 530 330 555 380 585 415 630 430 690 435 780 405 795 370 850 330 862 270 825 220 770 175 700Z" fill="#2458c8"/>
                        <path d="M240 635L265 615 295 615 330 690 335 730 310 775 280 755 245 685Z" fill="#2e6cf5"/>
                        <path d="M240 635L270 600 262 590 295 615 265 615Z" fill="#e33014"/>
                        <path d="M240 645L270 605 262 625Z" fill="#8a97a8" stroke="none"/>
                        <path d="M180 520L215 580 240 635M220 505L240 570 265 615M255 515L265 570 295 615M290 530L300 590 330 690M148 600L200 625 240 635M160 550L220 590M175 700L215 680 245 685M220 770L285 705M270 825L310 775M330 862L340 780M370 850L375 770 335 730M405 795L380 700 330 690M430 690L380 700M415 630L350 625M380 585L330 610 300 590M300 740L375 770M435 780L375 770" fill="none"/>
                        <!-- bottom strip -->
                        <path d="M465 740L510 750 565 745 620 710 640 712 560 765 470 770Z" fill="#2b62d6"/>
                        <path d="M405 845L515 785 510 805 405 875Z" fill="#2458c8"/>
                        <path d="M420 835L625 705 560 760 470 815Z" fill="#1a3f8e"/>
                        <path d="M475 770L520 770 490 790Z" fill="#b8bcc0" stroke="none"/>
                    </svg>
                    <!-- triad -->
                    <svg class="absolute left-0 top-[320px] w-[100px] h-[60px] text-[6px]">
                        <path d="M34 45V17" stroke="#2a34c8" stroke-width="1"/><ellipse cx="34" cy="27" rx="1.500" ry="5" fill="#3a4be0"/>
                        <path d="M34 45L11 34" stroke="#3cb84a" stroke-width="1"/><ellipse cx="18" cy="37.500" rx="5" ry="1.500" fill="#3cb84a" transform="rotate(25 18 37.500)"/>
                        <path d="M34 45L57 34" stroke="#cc4a4a" stroke-width="1"/><ellipse cx="47" cy="39" rx="5" ry="1.500" fill="#cc4a4a" transform="rotate(-25 47 39)"/>
                        <text x="33" y="10" fill="#d8d8d8" font-size="7">Z</text><text x="5" y="32" fill="#d8d8d8" font-size="7">Y</text><text x="61" y="32" fill="#d8d8d8" font-size="7">X</text>
                    </svg>
                </div>
            </div>

            <!-- bottom toolbar -->
            <div class="h-[20px] flex items-center shrink-0 pl-[8px] pb-[3px] text-[5.500px] text-[#444]">
                <div class="w-[1px] h-[12px] border-l border-dotted border-[#444]"></div>
                <svg class="w-[11px] h-[11px] ml-[2px]"><use href="#mix"/></svg>
                <svg class="w-[11px] h-[11px] ml-[3px]"><use href="#fblue"/></svg>
                <svg class="w-[11px] h-[11px] ml-[2px]"><use href="#boxi"/></svg>
                <svg class="w-[11px] h-[11px] ml-[3px]"><use href="#gear"/></svg>
                <svg class="w-[11px] h-[11px] ml-[3px]"><use href="#redb"/></svg>
                <svg class="w-[11px] h-[11px] ml-[3px]"><use href="#axis"/></svg>
                <svg class="w-[3px] h-[2px] ml-[1px]"><use href="#carrow"/></svg>
                <div class="w-[1px] h-[10px] ml-[3px] bg-[#ccc]"></div>
                <svg class="w-[10px] h-[10px] ml-[7px]"><use href="#xred"/></svg>
                <svg class="w-[12px] h-[12px] ml-[4px]"><use href="#blob"/></svg>
                <svg class="w-[12px] h-[12px] ml-[2px]"><use href="#swapf"/></svg>
                <svg class="w-[11px] h-[12px] ml-[3px]"><use href="#fork"/></svg>
                <div class="w-[1px] h-[12px] ml-[4px] border-l border-dotted border-[#444]"></div>
                <svg class="w-[10px] h-[10px] ml-[2px]"><use href="#autoi"/></svg>
                <div class="w-[32px] h-[10px] bg-white flex items-center pl-[1px] ml-[1px]">Auto</div>
                <svg class="w-[3px] h-[2px] ml-[2px]"><use href="#carrow"/></svg>
                <svg class="w-[11px] h-[11px] ml-[3px]"><use href="#ring"/></svg>
                <svg class="w-[3px] h-[2px] ml-[1px]"><use href="#carrow"/></svg>
                <svg class="w-[11px] h-[11px] ml-[3px]"><use href="#ringd"/></svg>
                <svg class="w-[3px] h-[2px] ml-[1px]"><use href="#carrow"/></svg>
                <svg class="w-[11px] h-[11px] ml-[3px]"><use href="#cube"/></svg>
                <div class="w-[1px] h-[10px] ml-[3px] bg-[#ccc]"></div>
                <svg class="w-[9px] h-[11px] ml-[5px]"><use href="#compi"/></svg>
                <div class="w-[35px] h-[10px] bg-white flex items-center pl-[1px]">By Comp</div>
                <svg class="w-[3px] h-[2px] ml-[2px]"><use href="#carrow"/></svg>
                <svg class="w-[11px] h-[11px] ml-[3px]"><use href="#wire"/></svg>
                <svg class="w-[3px] h-[2px] ml-[1px]"><use href="#carrow"/></svg>
                <svg class="w-[11px] h-[11px] ml-[4px]"><use href="#cubed"/></svg>
                <svg class="w-[3px] h-[2px] ml-[1px]"><use href="#carrow"/></svg>
                <svg class="w-[8px] h-[8px] ml-[7px]" viewBox="0 0 12 12"><path d="M1 10L11 3" stroke="#555" stroke-width="1.300"/></svg>
                <svg class="w-[3px] h-[2px] ml-[1px]"><use href="#carrow"/></svg>
                <svg class="w-[11px] h-[11px] ml-[5px]"><use href="#dia"/></svg>
                <svg class="w-[3px] h-[2px] ml-[1px]"><use href="#carrow"/></svg>
                <svg class="w-[12px] h-[12px] ml-[3px]"><use href="#diab"/></svg>
                <svg class="w-[3px] h-[2px] ml-[1px]"><use href="#carrow"/></svg>
                <svg class="w-[9px] h-[9px] ml-[7px]"><use href="#dots"/></svg>
                <svg class="w-[11px] h-[11px] ml-[4px]"><use href="#mon"/></svg>
                <div class="w-[1px] h-[12px] ml-[5px] border-l border-dotted border-[#444]"></div>
                <svg class="w-[10px] h-[10px] ml-[4px]"><use href="#star"/></svg>
            </div>

            <!-- command panel -->
            <div class="flex pl-[4px] text-[6.500px] tracking-[0.1px] text-[#555]">
                <div class="w-[117px]">
                    <div class="h-[10px] leading-[9px] text-center border-b border-r border-[#999]">assemblies</div>
                    <div class="h-[10px] leading-[9px] text-center border-b border-r border-[#999]">organize</div>
                    <div class="h-[10px] leading-[9px] text-center border-b border-r border-[#999]">color</div>
                    <div class="h-[10px] leading-[9px] text-center border-b border-r border-[#999]">rename</div>
                    <div class="h-[10px] leading-[9px] text-center border-b border-r border-[#999]">reorder</div>
                    <div class="h-[10px] leading-[9px] text-center border-b border-r border-[#999]">convert</div>
                    <div class="h-[10px] leading-[9px] text-center border-b border-r border-[#999]">build menu</div>
                </div>
                <div class="w-[118px]">
                    <div class="h-[10px] leading-[9px] text-center border-b border-r border-[#999]">find</div>
                    <div class="h-[10px] leading-[9px] text-center border-b border-r border-[#999]">mask</div>
                    <div class="h-[10px] leading-[9px] text-center border-b border-r border-[#999]">delete</div>
                </div>
                <div class="w-[116px]">
                    <div class="h-[10px] leading-[9px] text-center border-b border-r border-[#999]">translate</div>
                    <div class="h-[10px] leading-[9px] text-center border-b border-r border-[#999]">rotate</div>
                    <div class="h-[10px] leading-[9px] text-center border-b border-r border-[#999]">scale</div>
                    <div class="h-[10px] leading-[9px] text-center border-b border-r border-[#999]">reflect</div>
                    <div class="h-[10px] leading-[9px] text-center border-b border-r border-[#999]">project</div>
                    <div class="h-[10px] leading-[9px] text-center border-b border-r border-[#999]">position</div>
                    <div class="h-[10px] leading-[9px] text-center border-b border-r border-[#999]">permute</div>
                </div>
                <div class="w-[118px]">
                    <div class="h-[10px] leading-[9px] text-center border-b border-r border-[#999]">check elems</div>
                    <div class="h-[10px] leading-[9px] text-center border-b border-r border-[#999]">edges</div>
                    <div class="h-[10px] leading-[9px] text-center border-b border-r border-[#999]">faces</div>
                    <div class="h-[10px] leading-[9px] text-center border-b border-r border-[#999]">features</div>
                    <div class="h-[10px] leading-[9px] text-center border-b border-r border-[#999]">normals</div>
                    <div class="h-[10px] leading-[9px] text-center border-b border-r border-[#999]">dependency</div>
                    <div class="h-[10px] leading-[9px] text-center border-b border-r border-[#999]">penetration</div>
                </div>
                <div class="w-[112px]">
                    <div class="h-[10px] leading-[9px] text-center border-b border-r border-[#999]">numbers</div>
                    <div class="h-[10px] leading-[9px] text-center border-b border-r border-[#999]">renumber</div>
                    <div class="h-[10px] leading-[9px] text-center border-b border-r border-[#999]">count</div>
                    <div class="h-[10px] leading-[9px] text-center border-b border-r border-[#999]">mass calc</div>
                    <div class="h-[10px] leading-[9px] text-center border-b border-r border-[#999]">tags</div>
                    <div class="h-[10px] leading-[9px] text-center border-b border-r border-[#999]">HyperMorph</div>
                </div>
                <div class="pl-[5px]">
                    <div class="h-[10px] flex items-center gap-[8px]"><span class="w-[5px] h-[5px] rounded-full border border-[#555] border-r-transparent border-b-transparent"></span>Geom</div>
                    <div class="h-[10px] flex items-center gap-[8px]"><span class="w-[5px] h-[5px] rounded-full border border-[#555] border-r-transparent border-b-transparent"></span>1D</div>
                    <div class="h-[10px] flex items-center gap-[8px]"><span class="w-[5px] h-[5px] rounded-full border border-[#555] border-r-transparent border-b-transparent"></span>2D</div>
                    <div class="h-[10px] flex items-center gap-[8px]"><span class="w-[5px] h-[5px] rounded-full border border-[#555] border-r-transparent border-b-transparent"></span>3D</div>
                    <div class="h-[10px] flex items-center gap-[8px]"><span class="w-[5px] h-[5px] rounded-full border border-[#555] border-r-transparent border-b-transparent"></span>Analysis</div>
                    <div class="h-[10px] flex items-center gap-[8px]"><span class="w-[5px] h-[5px] rounded-full border border-[#555] bg-[#444]"></span>Tool</div>
                    <div class="h-[10px] flex items-center gap-[8px]"><span class="w-[5px] h-[5px] rounded-full border border-[#555] border-r-transparent border-b-transparent"></span>Post</div>
                </div>
            </div>
        </div>
    </div>

    <!-- status bar -->
    <div class="h-[13px] flex items-center border-t border-[#ccc] shrink-0 text-[6.500px] text-[#444]">
        <span class="pl-[4px] text-[7.500px] grow">Tools</span>
        <div class="w-[63px] h-full border border-[#777] border-b-0"></div>
        <div class="w-[62px] h-full border border-[#777] border-b-0 pl-[1px] ml-[1px] flex items-center">Module Model</div>
        <div class="w-[72px] h-full border border-[#777] border-b-0 ml-[1px]"></div>
        <div class="w-[71px] h-full border border-[#777] border-b-0 ml-[1px] flex items-center pl-[2px] gap-[1px]"><span class="w-[5px] h-[5px] bg-[#2a50c8]"></span>Lateral_10</div>
    </div>
    <div class="absolute left-0 right-0 bottom-[-2px] h-[2px] bg-[#6ea5d6]"></div>
</div>

<!-- blue annotation frame -->
<div class="absolute left-[21px] top-[77px] w-[313px] h-[209px] border-4 border-[#2c5494]"></div>

<!-- viewer controls -->
<div class="absolute left-[3px] top-[546px] flex gap-[5px] text-[#ddd]">
    <div class="w-[15px] h-[15px] rounded-full border border-[#ddd] flex items-center justify-center text-[7px]">◁</div>
    <div class="w-[15px] h-[15px] rounded-full border border-[#ddd] flex items-center justify-center text-[7px]">▷</div>
    <div class="w-[15px] h-[15px] rounded-full border border-[#ddd] flex items-center justify-center"><svg class="w-[9px] h-[9px]" viewBox="0 0 12 12"><path d="M2 10l1-3 6-6 2 2-6 6z" fill="none" stroke="#ddd"/></svg></div>
    <div class="w-[15px] h-[15px] rounded-full border border-[#ddd] flex items-center justify-center"><svg class="w-[9px] h-[9px]" viewBox="0 0 12 12"><path d="M1 4h7v7H1zM4 1h7v7" fill="none" stroke="#ddd"/></svg></div>
    <div class="w-[15px] h-[15px] rounded-full border border-[#ddd] flex items-center justify-center"><svg class="w-[9px] h-[9px]" viewBox="0 0 12 12"><circle cx="5" cy="5" r="3.500" fill="none" stroke="#ddd"/><path d="M8 8l3 3" stroke="#ddd"/></svg></div>
    <div class="w-[15px] h-[15px] rounded-full border border-[#ddd] flex items-center justify-center text-[7px]">···</div>
</div>
</body>
</html>
